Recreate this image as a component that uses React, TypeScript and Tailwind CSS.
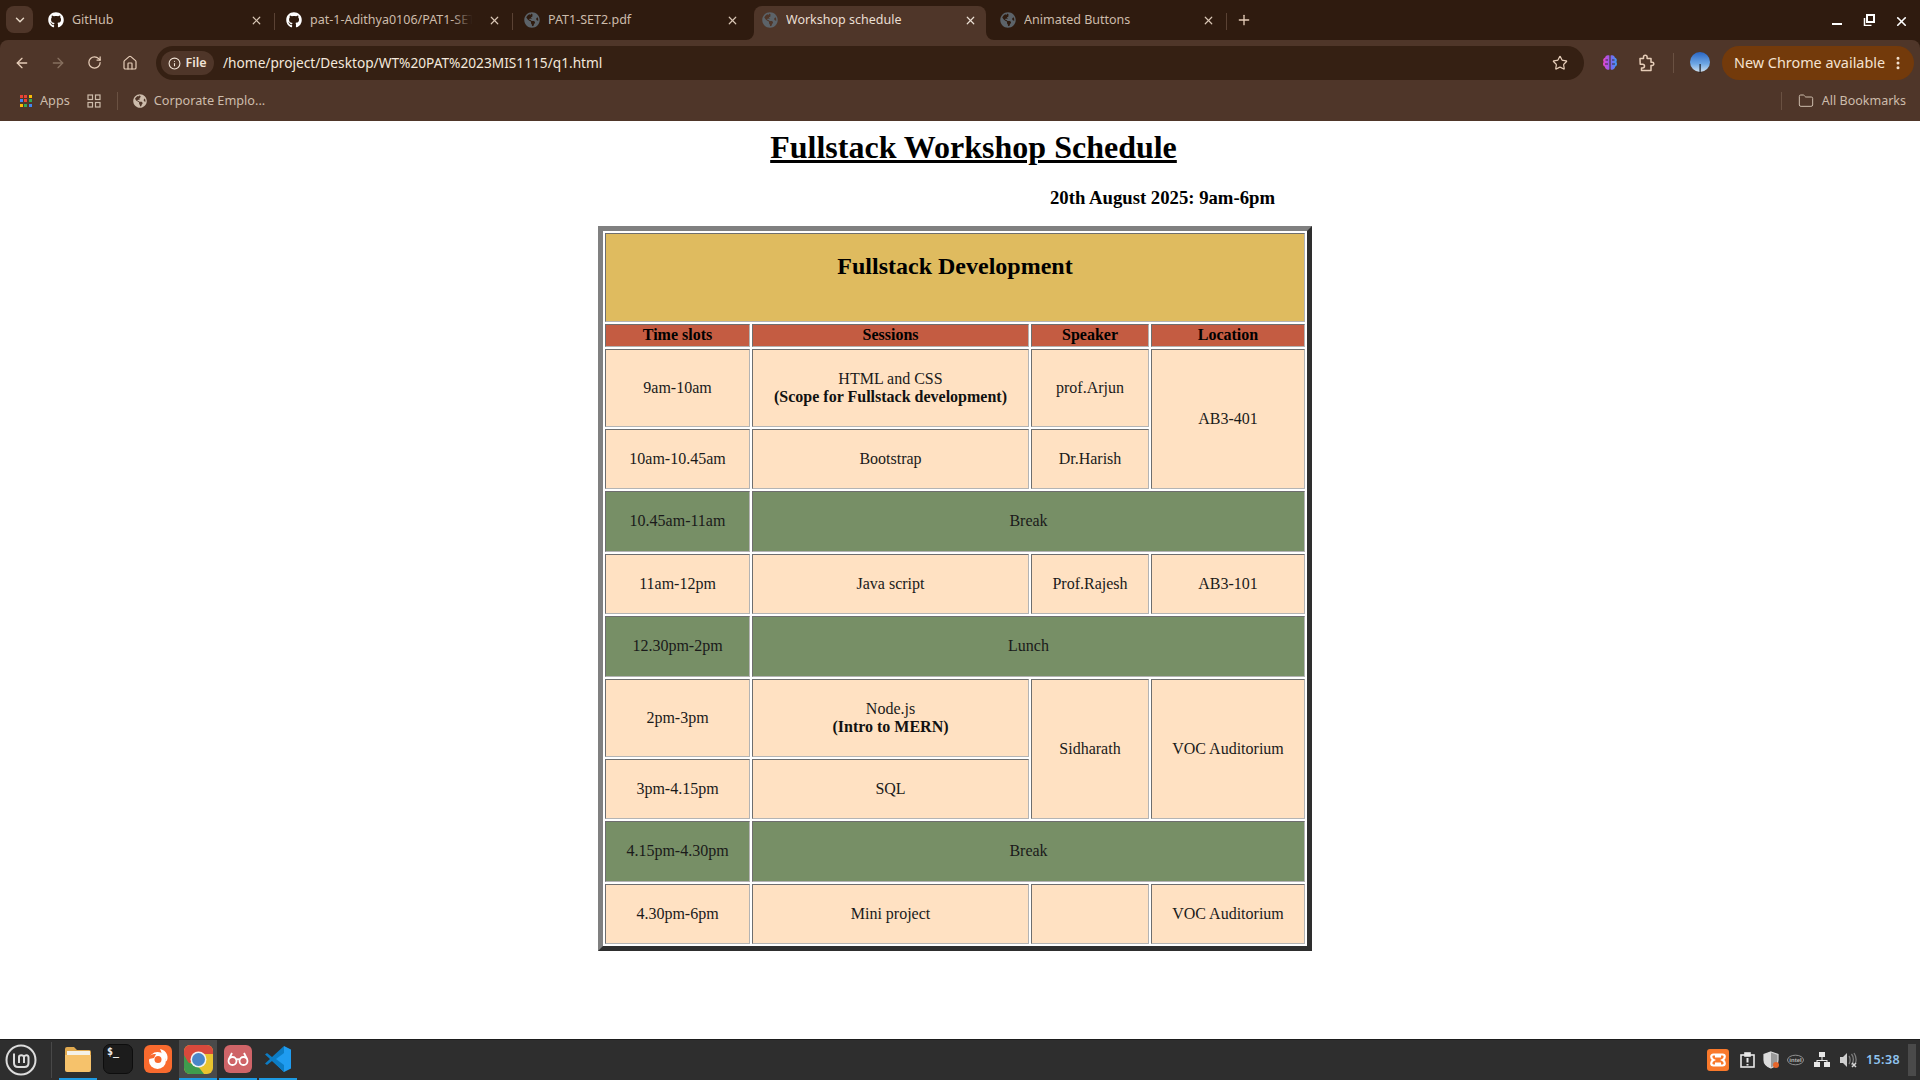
import React from "react";
import { ArrowLeft, ArrowRight, RotateCw, Home, Info, Star, X, Plus, ChevronDown, Folder, EllipsisVertical } from "lucide-react";
import { FaGithub, FaGlobeAmericas } from "react-icons/fa";

const ui = "font-['Noto_Sans',sans-serif]";
const cellBorder = "border border-t-[#6e6e6e] border-l-[#6e6e6e] border-r-[#b4b4b4] border-b-[#b4b4b4]";

function Corner({ side }: { side: "l" | "r" }) {
  return (
    <svg width="8" height="8" viewBox="0 0 8 8" className={side === "l" ? "absolute bottom-0 -left-2" : "absolute bottom-0 -right-2"}>
      {side === "l" ? <path d="M8 0V8H0A8 8 0 0 0 8 0Z" fill="#4f3629" /> : <path d="M0 0V8H8A8 8 0 0 1 0 0Z" fill="#4f3629" />}
    </svg>
  );
}

function Tab({ title, icon, active, sep, fade }: { title: string; icon: React.ReactNode; active?: boolean; sep?: boolean; fade?: boolean }) {
  return (
    <div className="relative w-[238px] h-full px-[3px] pt-[6px] shrink-0">
      <div className={active ? "relative flex items-center h-[34px] pl-[8px] rounded-t-[8px] bg-[#4f3629]" : "relative flex items-center h-[34px] pl-[8px] pb-[6px]"}>
        {active && <Corner side="l" />}
        {active && <Corner side="r" />}
        <span className={active ? "w-4 h-4 flex items-center justify-center mb-[6px]" : "w-4 h-4 flex items-center justify-center"}>{icon}</span>
        <div className={active ? "relative ml-[8px] w-[176px] h-[18px] -mt-[6px] overflow-hidden whitespace-nowrap" : "relative ml-[8px] w-[176px] h-[18px] overflow-hidden whitespace-nowrap"}>
          <span className={active ? "text-[12.5px] leading-[17px] block text-[#eadfd3]" : "text-[12.5px] leading-[17px] block text-[#cdbcab]"}>{title}</span>
          {fade && <span className="absolute right-0 top-0 bottom-0 w-[34px] bg-gradient-to-r from-transparent via-[#2f1b0f] via-60% to-[#2f1b0f]" />}
        </div>
        <X size={13} strokeWidth={2.2} className={active ? "ml-[2px] mb-[6px] text-[#eadfd3]" : "ml-[2px] text-[#d8c6b4]"} />
      </div>
      {sep && <span className="absolute right-0 top-[13px] w-px h-[17px] bg-[#5a4234]" />}
    </div>
  );
}

function Globe({ size = 16 }: { size?: number }) {
  return <FaGlobeAmericas size={size} className="text-[#5c6369]" />;
}

function Puzzle() {
  return (
    <svg width="18" height="18" viewBox="0 0 18 18" fill="none" stroke="#e6cdb8" strokeWidth="1.5" strokeLinejoin="round">
      <path d="M2 4.5h3.5V3a1.8 1.8 0 0 1 3.6 0v1.5H13v3.7h1.2a1.6 1.6 0 0 1 0 3.2H13V16.5H3.500V14H4.600a1.900 1.900 0 0 0 0-3.800H2.200L2 4.500Z" />
    </svg>
  );
}

function Brain() {
  return (
    <svg width="16" height="18" viewBox="0 0 16 18">
      <defs>
        <linearGradient id="br" x1="0" y1="0" x2="1" y2="0">
          <stop offset="0" stopColor="#e845c8" />
          <stop offset="0.5" stopColor="#8a5cf0" />
          <stop offset="1" stopColor="#3a9cf5" />
        </linearGradient>
      </defs>
      <path d="M7.4 1.6C5.2.6 3.3 1.8 3.2 3.6 1.3 4.2.6 6.4 1.6 8c-1.2 1.7-.6 4 1.3 4.8.1 2.2 2.8 3.8 4.5 2.4V1.6ZM8.6 1.6c2.2-1 4.100.2 4.200 2 1.900.6 2.600 2.800 1.600 4.400 1.200 1.700.6 4-1.300 4.800-.1 2.200-2.800 3.800-4.500 2.400V1.600Z" fill="url(#br)" />
      <path d="M3.500 6h2.500M3 10h3M10 6h2.500M10 10h3" stroke="#3a2a3a" strokeWidth="1" />
    </svg>
  );
}

function Avatar() {
  return (
    <svg width="20" height="24" viewBox="0 0 20 24">
      <defs>
        <linearGradient id="sky" x1="0" y1="0" x2="0" y2="1">
          <stop offset="0" stopColor="#2a66c4" />
          <stop offset="0.6" stopColor="#6fa8e4" />
          <stop offset="1" stopColor="#cfe0ee" />
        </linearGradient>
      </defs>
      <circle cx="10" cy="11" r="10" fill="url(#sky)" />
      <rect x="9.500" y="13" width="1.200" height="9" fill="#1c1c22" />
    </svg>
  );
}

function AppsGrid() {
  const c = ["#ea4335", "#ea4335", "#fbbc05", "#4285f4", "#ea4335", "#34a853", "#fbbc05", "#34a853", "#4285f4"];
  return (
    <div className="grid grid-cols-3 gap-[1px] w-[12px] h-[12px]">
      {c.map((x, i) => (
        <span key={i} className="w-[3px] h-[3px]" style={{ background: x }} />
      ))}
    </div>
  );
}

function Cell({ children, green, rowSpan, colSpan }: { children?: React.ReactNode; green?: boolean; rowSpan?: number; colSpan?: number }) {
  const color = green ? "bg-[#778f66] text-[#1a1a1a]" : "bg-[#ffe1c2] text-[#1a1a1a]";
  return (
    <td rowSpan={rowSpan} colSpan={colSpan} className={`${cellBorder} text-center align-middle p-0 ${color}`}>
      {children}
    </td>
  );
}

function MintLogo() {
  return (
    <svg width="32" height="32" viewBox="0 0 32 32" fill="none" stroke="#dcdcdc">
      <circle cx="16" cy="16" r="14.500" strokeWidth="2" />
      <path d="M9 9.500v9.500c0 2.500 1.500 4 4 4h6.500c2.500 0 4-1.500 4-4v-5.500c0-3-4-3-4.500-.5M14 19v-6c0-2.500 4.500-2.500 5 0v6" strokeWidth="2" />
    </svg>
  );
}

function FolderIcon() {
  return (
    <svg width="28" height="27" viewBox="0 0 28 27">
      <path d="M1 3a2 2 0 0 1 2-2h7l3 3h12a2 2 0 0 1 2 2v4H1Z" fill="#e0a94f" />
      <rect x="3" y="5" width="23" height="5" fill="#f4f1e8" />
      <path d="M1 9h26v15a2 2 0 0 1-2 2H3a2 2 0 0 1-2-2Z" fill="#f6c26b" />
    </svg>
  );
}

function TerminalIcon() {
  return (
    <div className="w-[30px] h-[30px] rounded-[7px] bg-[#1c1c1c] border border-[#0d0d0d] pl-[3px] pt-[1px] leading-[12px] text-[10px] font-bold text-[#eee] font-['DejaVu_Sans_Mono',monospace]">
      $_
    </div>
  );
}

function FirefoxIcon() {
  return (
    <svg width="28" height="28" viewBox="0 0 28 28">
      <rect width="28" height="28" rx="6" fill="#f96a2e" />
      <circle cx="13.500" cy="15.500" r="8.500" fill="#fff" />
      <circle cx="14" cy="14.500" r="3.500" fill="#f96a2e" />
      <path d="M16 4c3 .500 6 2.500 7 5.500 1 3 .500 5-.500 7-1-3.500-2.500-5-5-6 .500-2-.500-4.500-1.500-6.500Z" fill="#fff" />
      <path d="M5 12c1.500-2.500 4-3.500 7-3l-2 4-5 1Z" fill="#f96a2e" />
    </svg>
  );
}

function ChromeIcon() {
  return (
    <svg width="29" height="29" viewBox="0 0 29 29">
      <defs>
        <clipPath id="cc">
          <rect width="29" height="29" rx="6" />
        </clipPath>
      </defs>
      <g clipPath="url(#cc)">
        <rect width="29" height="29" fill="#e9c32f" />
        <path d="M0 0h29v9H14.500L4 20 0 14Z" fill="#d9493c" />
        <path d="M0 10 11 29H0Z" fill="#3f9c4d" />
        <path d="M2 17l8 12h10l-7-9Z" fill="#3f9c4d" />
      </g>
      <circle cx="14.500" cy="14.500" r="8" fill="#f3f3f3" />
      <circle cx="14.500" cy="14.500" r="6.500" fill="#4a86c8" />
    </svg>
  );
}

function GlassesIcon() {
  return (
    <svg width="28" height="28" viewBox="0 0 28 28">
      <rect width="28" height="28" rx="6" fill="#cf6468" />
      <g fill="none" stroke="#fff" strokeWidth="1.800">
        <circle cx="8.500" cy="16" r="4" />
        <circle cx="19.500" cy="16" r="4" />
        <path d="M12 15c1-1 3-1 4 0M5 14l3-6M23 14l-3-6" />
      </g>
    </svg>
  );
}

function VsCodeIcon() {
  return (
    <svg width="28" height="28" viewBox="0 0 28 28">
      <path d="M20 1 27 4.500V23.500L20 27 8 15.500l12-9Z" fill="#1f9cf0" />
      <path d="M20 1 8 12 3 8 1 9.500l5 4.500-5 4.500L3 20l5-4 12 11V20l-8-6 8-6Z" fill="#0c7cc4" />
    </svg>
  );
}

function Xampp() {
  return (
    <div className="w-[22px] h-[22px] rounded-[3px] bg-[#f9792b] flex items-center justify-center">
      <svg width="16" height="14" viewBox="0 0 16 14" fill="none" stroke="#fff" strokeWidth="2.200">
        <path d="M5 3.500h6M5 10.500h6M3.500 1.500c-3 0-3 4 0 5.500-3 1.500-3 5.500 0 5.500h9c3 0 3-4 0-5.500 3-1.500 3-5.500 0-5.500h-9Z" />
      </svg>
    </div>
  );
}

export default function App() {
  return (
    <div className="w-[1920px] h-[1080px] overflow-hidden flex flex-col bg-white">
      <header className={`${ui} shrink-0 h-[121px] bg-[#2f1b0f] flex flex-col`}>
        <div className="h-[40px] flex shrink-0">
          <div className="ml-[6px] mt-[6px] w-[27px] h-[27px] rounded-[8px] bg-[#4f3629] flex items-center justify-center shrink-0">
            <ChevronDown size={14} strokeWidth={2.5} className="text-[#e6d6c6]" />
          </div>
          <div className="w-[4px] shrink-0" />
          <Tab title="GitHub" icon={<FaGithub size={16} className="text-white" />} sep />
          <Tab title="pat-1-Adithya0106/PAT1-SET2" icon={<FaGithub size={16} className="text-white" />} sep fade />
          <Tab title="PAT1-SET2.pdf" icon={<Globe />} />
          <Tab title="Workshop schedule" icon={<Globe />} active />
          <Tab title="Animated Buttons" icon={<Globe />} sep />
          <Plus size={16} strokeWidth={2} className="ml-[9px] mt-[12px] text-[#e6cdb8] shrink-0" />
          <div className="ml-auto flex items-start pt-[14px] pr-[11px] gap-[17px] text-white">
            <svg width="16" height="12" viewBox="0 0 16 12"><rect x="4" y="9" width="10" height="2" fill="#fff" /></svg>
            <svg width="16" height="12" viewBox="0 0 16 12" fill="none" stroke="#fff" strokeWidth="1.500"><rect x="6" y="1" width="7" height="7" strokeWidth="2" /><path d="M3.500 4v7.500h7" /></svg>
            <X size={15} strokeWidth={2.6} />
          </div>
        </div>

        <div className="flex-1 rounded-t-[8px] bg-[#4f3629] flex flex-col">
          <div className="h-[46px] flex items-center shrink-0">
            <div className="ml-[4px] flex shrink-0">
              <span className="w-9 flex justify-center"><ArrowLeft size={16} strokeWidth={2} className="text-[#e6cdb8]" /></span>
              <span className="w-9 flex justify-center"><ArrowRight size={16} strokeWidth={2} className="text-[#87705f]" /></span>
              <span className="w-9 flex justify-center"><RotateCw size={15} strokeWidth={2} className="text-[#e6cdb8]" /></span>
              <span className="w-9 flex justify-center"><Home size={16} strokeWidth={1.800} className="text-[#e6cdb8]" /></span>
            </div>
            <div className="ml-[8px] w-[1428px] h-[34px] rounded-full bg-[#352013] flex items-center shrink-0">
              <div className="ml-[5px] w-[53px] h-[24px] rounded-full bg-[#4f3629] flex items-center justify-center gap-[4px] text-[12.5px] font-semibold text-[#f0e3d6]">
                <Info size={13} strokeWidth={2} />
                <span>File</span>
              </div>
              <span className="ml-[9px] text-[13.7px] text-[#f3e8dc]">/home/project/Desktop/WT%20PAT%2023MIS1115/q1.html</span>
              <Star size={16} strokeWidth={1.800} className="ml-auto mr-[16px] text-[#e6cdb8]" />
            </div>
            <div className="ml-[18px] shrink-0 flex items-center"><Brain /></div>
            <div className="ml-[20px] shrink-0 flex items-center"><Puzzle /></div>
            <span className="ml-[17px] w-px h-[20px] bg-[#6a5142] shrink-0" />
            <div className="ml-[16px] shrink-0 flex items-center"><Avatar /></div>
            <div className="ml-[12px] w-[192px] h-[34px] rounded-full bg-[#733a0b] flex items-center pl-[12px] shrink-0">
              <span className="text-[14.4px] text-[#f5e3d2] whitespace-nowrap">New Chrome available</span>
              <EllipsisVertical size={16} strokeWidth={2.500} className="ml-auto mr-[8px] text-[#f5e3d2]" />
            </div>
          </div>

          <div className="flex-1 flex items-center pb-[5px] text-[12.7px] text-[#cdbcab]">
            <div className="ml-[20px] shrink-0"><AppsGrid /></div>
            <span className="ml-[8px]">Apps</span>
            <svg width="14" height="14" viewBox="0 0 14 14" fill="none" stroke="#cdbcab" strokeWidth="1.200" className="ml-[17px]">
              <rect x="1" y="1" width="4.500" height="4.500" /><rect x="8.500" y="1" width="4.500" height="4.500" /><rect x="1" y="8.500" width="4.500" height="4.500" /><rect x="8.500" y="8.500" width="4.500" height="4.500" />
            </svg>
            <span className="ml-[16px] w-px h-[18px] bg-[#6a5142]" />
            <span className="ml-[15px]"><FaGlobeAmericas size={14} className="text-[#cdbcab]" /></span>
            <span className="ml-[7px]">Corporate Emplo...</span>
            <span className="ml-auto w-px h-[18px] bg-[#6a5142]" />
            <Folder size={16} strokeWidth={1.500} className="ml-[16px] text-[#cdbcab]" />
            <span className="ml-[8px] mr-[14px] text-[12.5px]">All Bookmarks</span>
          </div>
        </div>
      </header>

      <main className="flex-1 min-h-0 font-['Liberation_Serif',serif] text-black">
        <h1 className="pl-[27px] pt-[8px] text-center text-[32px] leading-[37px] font-bold underline">Fullstack Workshop Schedule</h1>
        <p className="pl-[405px] mt-[20px] text-center text-[18.72px] leading-[24px] font-bold">20th August 2025: 9am-6pm</p>
        <div className="pr-[10px] mt-[16px]">
          <table className="mx-auto w-[714px] table-fixed border-separate border-spacing-[2px] border-[5px] border-t-[#808080] border-l-[#808080] border-r-[#2e2e2e] border-b-[#2e2e2e] text-[16px] leading-[18px]">
            <colgroup>
              <col className="w-[145px]" />
              <col className="w-[277px]" />
              <col className="w-[118px]" />
              <col />
            </colgroup>
            <tbody>
              <tr>
                <th colSpan={4} className={`h-[89px] align-top pt-[18px] bg-[#dfbb5f] ${cellBorder} text-[24px] leading-[28px] font-bold text-center`}>Fullstack Development</th>
              </tr>
              <tr>
                {["Time slots", "Sessions", "Speaker", "Location"].map((h) => (
                  <th key={h} className={`h-[22.5px] p-0 bg-[#c45c42] ${cellBorder} font-bold text-center`}>{h}</th>
                ))}
              </tr>
              <tr className="h-[78px]">
                <Cell>9am-10am</Cell>
                <Cell>HTML and CSS<br /><b className="text-[#111]">(Scope for Fullstack development)</b></Cell>
                <Cell>prof.Arjun</Cell>
                <Cell rowSpan={2}>AB3-401</Cell>
              </tr>
              <tr className="h-[60.5px]">
                <Cell>10am-10.45am</Cell>
                <Cell>Bootstrap</Cell>
                <Cell>Dr.Harish</Cell>
              </tr>
              <tr className="h-[60.5px]">
                <Cell green>10.45am-11am</Cell>
                <Cell green colSpan={3}>Break</Cell>
              </tr>
              <tr className="h-[60.5px]">
                <Cell>11am-12pm</Cell>
                <Cell>Java script</Cell>
                <Cell>Prof.Rajesh</Cell>
                <Cell>AB3-101</Cell>
              </tr>
              <tr className="h-[60.5px]">
                <Cell green>12.30pm-2pm</Cell>
                <Cell green colSpan={3}>Lunch</Cell>
              </tr>
              <tr className="h-[78.5px]">
                <Cell>2pm-3pm</Cell>
                <Cell>Node.js<br /><b className="text-[#111]">(Intro to MERN)</b></Cell>
                <Cell rowSpan={2}>Sidharath</Cell>
                <Cell rowSpan={2}>VOC Auditorium</Cell>
              </tr>
              <tr className="h-[60px]">
                <Cell>3pm-4.15pm</Cell>
                <Cell>SQL</Cell>
              </tr>
              <tr className="h-[60.5px]">
                <Cell green>4.15pm-4.30pm</Cell>
                <Cell green colSpan={3}>Break</Cell>
              </tr>
              <tr className="h-[60px]">
                <Cell>4.30pm-6pm</Cell>
                <Cell>Mini project</Cell>
                <Cell></Cell>
                <Cell>VOC Auditorium</Cell>
              </tr>
            </tbody>
          </table>
        </div>
      </main>

      <footer className={`${ui} shrink-0 h-[41px] bg-[#2e2e2e] border-t border-[#1d1d1d] flex items-stretch`}>
        <div className="ml-[5px] w-[32px] flex items-center shrink-0"><MintLogo /></div>
        <div className="ml-[14px] my-[2px] w-px bg-[#484848] shrink-0" />
        <div className="ml-[6px] flex">
          {[
            { el: <FolderIcon />, on: true },
            { el: <TerminalIcon />, on: false },
            { el: <FirefoxIcon />, on: false },
            { el: <ChromeIcon />, on: true, hi: true },
            { el: <GlassesIcon />, on: true },
            { el: <VsCodeIcon />, on: true },
          ].map((a, i) => (
            <div key={i} className="w-[40px] px-px">
              <div className={a.hi ? "h-full flex flex-col bg-[#4a4a4a]" : "h-full flex flex-col"}>
                <div className="flex-1 flex items-center justify-center">{a.el}</div>
                <div className={a.on ? "h-[2px] bg-[#1d9ae2]" : "h-[2px]"} />
              </div>
            </div>
          ))}
        </div>
        <div className="ml-auto flex items-center pr-[4px]">
          <Xampp />
          <svg width="15" height="16" viewBox="0 0 15 16" className="ml-[11px]" fill="none" stroke="#e8e8e8" strokeWidth="1.600">
            <rect x="1" y="3" width="13" height="12" />
            <rect x="5" y="1" width="5" height="3" fill="#e8e8e8" />
            <path d="M7.500 6v4.500M7.500 12v1.500" strokeWidth="2" />
          </svg>
          <svg width="17" height="18" viewBox="0 0 17 18" className="ml-[8px]">
            <path d="M8 1 15 3.500V9c0 4-3 6.500-7 8C4 15.500 1 13 1 9V3.500Z" fill="#9a9a9a" stroke="#d8d8d8" strokeWidth="1.200" />
            <path d="M8 1V17C4 15.500 1 13 1 9V3.500Z" fill="#dcdcdc" />
            <circle cx="13" cy="14" r="3" fill="#e7662b" />
          </svg>
          <svg width="17" height="12" viewBox="0 0 17 12" className="ml-[7px]" fill="none" stroke="#a8a8a8" strokeWidth="0.800">
            <ellipse cx="8.500" cy="6" rx="8" ry="4.800" />
            <text x="8.500" y="8" textAnchor="middle" fontSize="6" fontWeight="700" fill="#b8b8b8" stroke="none" fontFamily="Liberation Sans, sans-serif">intel</text>
          </svg>
          <svg width="16" height="16" viewBox="0 0 16 16" className="ml-[10px]" fill="#e8e8e8">
            <rect x="5" y="0" width="6" height="5" />
            <rect x="0" y="10" width="6" height="5" />
            <rect x="10" y="10" width="6" height="5" />
            <path d="M7.500 5h1v3H13.500v2h-1V9h-9v1h-1V8H7.500Z" />
          </svg>
          <svg width="17" height="16" viewBox="0 0 17 16" className="ml-[10px]" fill="none">
            <path d="M0 5h3l4-4v14l-4-4H0Z" fill="#cfcfcf" />
            <path d="M9 4c1.500 2 1.500 6 0 8M11.500 2c2.500 3 2.500 8 0 11M14 1c2 3 2.500 7 1.500 10" stroke="#7d7d7d" strokeWidth="1.300" />
            <path d="M12 11l4 4M16 11l-4 4" stroke="#d8d8d8" strokeWidth="1.500" />
          </svg>
          <span className="ml-[9px] text-[12.5px] font-semibold text-[#8fc3ee] tracking-[0.4px]">15:38</span>
          <div className="ml-[8px] w-[8px] h-[32px] bg-[#4a4a4a]" />
        </div>
      </footer>
    </div>
  );
}
